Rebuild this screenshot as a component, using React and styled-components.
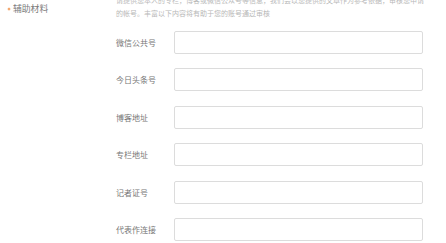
import React from "react";
import styled, { createGlobalStyle } from "styled-components";

const Global = createGlobalStyle`
  html, body { margin: 0; padding: 0; background: #fff; }
  body { font-family: "Noto Sans CJK SC", "Noto Sans", sans-serif; overflow: hidden; }
`;

const Page = styled.div`
  display: flex;
  align-items: flex-start;
  width: 446px;
  height: 243px;
  overflow: hidden;
`;

const Side = styled.div`
  width: 116px;
  flex: none;
  display: flex;
  align-items: center;
  gap: 3px;
  padding: 3px 0 0 8px;
  box-sizing: border-box;
`;

const Dot = styled.span`
  width: 2px;
  height: 2px;
  border-radius: 50%;
  background: #f2a063;
  box-shadow: 0 0 0 0.5px #f6c29a;
  margin-top: 1px;
`;

const SideTitle = styled.span`
  font-size: 8.8px;
  line-height: 11px;
  color: #7a7a7a;
`;

const Main = styled.div`
  display: flex;
  flex-direction: column;
`;

const Desc = styled.p`
  margin: -6px 0 0;
  font-size: 7px;
  line-height: 12.5px;
  color: #b8b8b8;
  white-space: nowrap;
`;

const DescLine = styled.span`
  display: block;
  letter-spacing: ${(p) => p.$spacing || 0}px;
`;

const Form = styled.div`
  display: grid;
  grid-template-columns: 58px 249px;
  grid-auto-rows: 23px;
  row-gap: 14.5px;
  margin-top: 11.7px;
`;

const Label = styled.label`
  align-self: center;
  font-size: 8px;
  color: #777;
  white-space: nowrap;
`;

const Input = styled.input`
  box-sizing: border-box;
  width: 100%;
  height: 100%;
  border: 1px solid #dcdcdc;
  border-radius: 2px;
  background: #fff;
  outline: none;
  margin: 0;
  padding: 0 6px;
`;

const fields = ["微信公共号", "今日头条号", "博客地址", "专栏地址", "记者证号", "代表作连接"];

export default function App() {
  return (
    <>
      <Global />
      <Page>
        <Side>
          <Dot />
          <SideTitle>辅助材料</SideTitle>
        </Side>
        <Main>
          <Desc>
            <DescLine>请提供您本人的专栏，博客或微信公众号等信息，我们会以您提供的文章作为参考依据，审核您申请</DescLine>
            <DescLine>的帐号。丰富以下内容将有助于您的账号通过审核</DescLine>
          </Desc>
          <Form>
            {fields.map((f) => (
              <React.Fragment key={f}>
                <Label>{f}</Label>
                <Input type="text" />
              </React.Fragment>
            ))}
          </Form>
        </Main>
      </Page>
    </>
  );
}
